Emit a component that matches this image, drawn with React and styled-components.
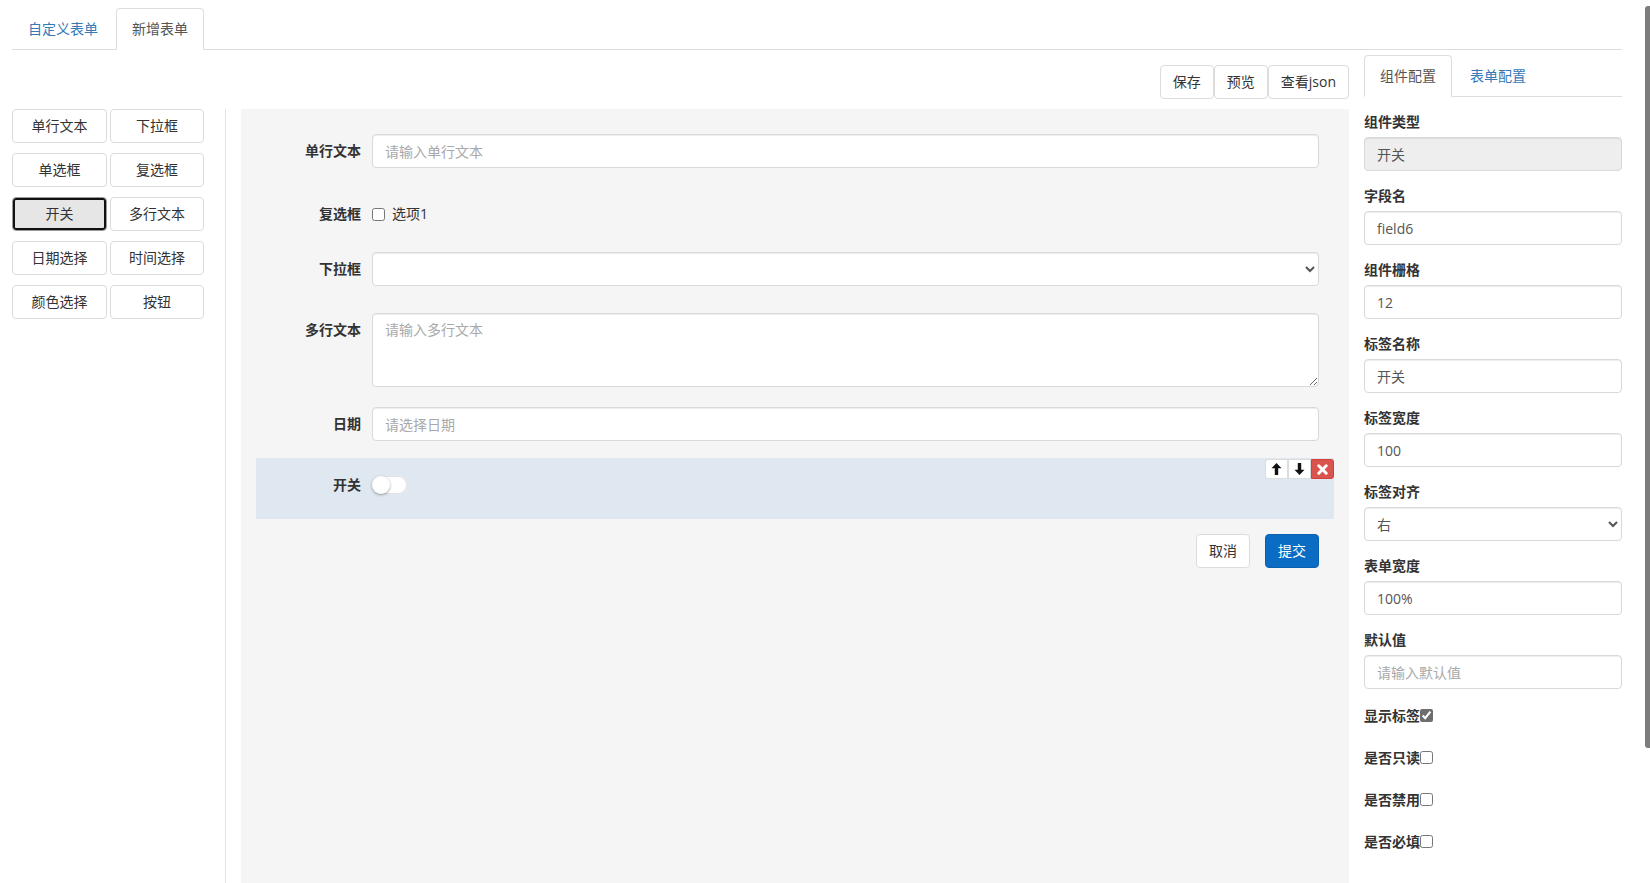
import React from "react";
import styled, { createGlobalStyle, css } from "styled-components";

const GlobalStyle = createGlobalStyle`
  * { box-sizing: border-box; }
  html { scrollbar-width: none; }
  ::-webkit-scrollbar { width: 0; height: 0; }
  body {
    margin: 0;
    background: #fff;
    color: #333;
    font-family: "Open Sans", "Noto Sans CJK SC", sans-serif;
    font-size: 14px;
    line-height: 20px;
  }
`;

const ScrollThumb = styled.div`
  position: fixed;
  top: 6px;
  right: 0;
  width: 5px;
  height: 742px;
  background: #7d7d7d;
  border-radius: 3px 0 0 3px;
  z-index: 10;
`;

const Page = styled.div`
  width: 1610px;
  margin-left: 12px;
  padding-top: 8px;
`;

const NavTabs = styled.div`
  display: flex;
  border-bottom: 1px solid #ddd;
`;

const Tab = styled.div`
  padding: 10px 15px;
  margin-right: 2px;
  margin-bottom: -1px;
  border: 1px solid transparent;
  border-radius: 4px 4px 0 0;
  line-height: 20px;
  color: #337ab7;
  cursor: pointer;
  ${(p) =>
    p.$active &&
    css`
      color: #555;
      background: #fff;
      border-color: #ddd #ddd transparent;
    `}
`;

const Main = styled.div`
  display: flex;
  align-items: stretch;
`;

const LeftCol = styled.div`
  width: 214px;
  margin-top: 59px;
  border-right: 1px solid #e3e3e3;
`;

const WidgetGrid = styled.div`
  display: grid;
  grid-template-columns: 95px 94px;
  column-gap: 3px;
  row-gap: 10px;
`;

const Btn = styled.button`
  height: 34px;
  padding: 6px 12px;
  font: inherit;
  line-height: 20px;
  color: #333;
  background: #fff;
  border: 1px solid #dcdcdc;
  border-radius: 4px;
  white-space: nowrap;
  cursor: pointer;
`;

const WidgetBtn = styled(Btn)`
  ${(p) =>
    p.$selected &&
    css`
      background: #e6e6e6;
      border-color: #9a9a9a;
      box-shadow: inset 0 0 0 2px #111;
    `}
`;

const CenterCol = styled.div`
  width: 1108px;
  margin-left: 15px;
  display: flex;
  flex-direction: column;
`;

const Toolbar = styled.div`
  display: flex;
  justify-content: flex-end;
  margin-top: 15px;
  margin-bottom: 10px;
`;

const Canvas = styled.div`
  flex: 1;
  min-height: 933px;
  background: #f5f5f5;
  padding: 25px 15px 15px;
  display: flex;
  flex-direction: column;
`;

const FormItem = styled.div`
  position: relative;
  display: flex;
  align-items: flex-start;
  min-height: 34px;
  padding: 0 15px;
  margin-top: ${(p) => p.$gap || 0}px;
  ${(p) =>
    p.$active &&
    css`
      background: #dfe8f1;
      padding: 10px 15px 17px;
    `}
`;

const ItemLabel = styled.div`
  flex-shrink: 0;
  width: 101px;
  padding: 7px 11px 0 0;
  text-align: right;
  font-weight: bold;
  line-height: 20px;
`;

const controlBase = css`
  flex: 1;
  width: 100%;
  height: 34px;
  padding: 6px 12px;
  font: inherit;
  line-height: 20px;
  color: #555;
  background: #fff;
  border: 1px solid #d9d9d9;
  border-radius: 4px;
  box-shadow: inset 0 1px 1px rgba(0, 0, 0, 0.075);
  outline: none;
  &::placeholder { color: #a9a9a9; }
  &:disabled { background: #eee; color: #555; }
`;

const Input = styled.input`
  ${controlBase}
`;

const Select = styled.select`
  ${controlBase}
  padding: 6px 8px;
`;

const TextArea = styled.textarea`
  ${controlBase}
  height: 74px;
  resize: vertical;
`;

const CheckLine = styled.label`
  display: flex;
  align-items: center;
  padding-top: 7px;
  line-height: 20px;
  color: #333;
`;

const Check = styled.input`
  width: 13px;
  height: 13px;
  margin: 0 7px 0 0;
  accent-color: #6e6e6e;
`;

const SwitchWrap = styled.div`
  display: flex;
  align-items: center;
  height: 34px;
`;

const SwitchTrack = styled.span`
  position: relative;
  display: inline-block;
  width: 35px;
  height: 18px;
  border-radius: 9px;
  background: #fff;
  box-shadow: inset 0 0 0 1px #e2e2e2;
`;

const SwitchKnob = styled.span`
  position: absolute;
  left: 0;
  top: 0;
  width: 18px;
  height: 18px;
  border-radius: 50%;
  background: #fff;
  box-shadow: 0 1px 3px rgba(0, 0, 0, 0.35);
`;

const ItemTools = styled.div`
  position: absolute;
  top: 1px;
  right: 0;
  display: flex;
`;

const ToolBtn = styled.button`
  width: 23px;
  height: 20px;
  padding: 0;
  display: flex;
  align-items: center;
  justify-content: center;
  background: ${(p) => (p.$danger ? "#d9534f" : "#fff")};
  border: 1px solid ${(p) => (p.$danger ? "#d43f3a" : "#ddd")};
  border-radius: ${(p) => (p.$danger ? "0 3px 3px 0" : p.$first ? "3px 0 0 3px" : "0")};
  cursor: pointer;
`;

const Actions = styled.div`
  display: flex;
  justify-content: flex-end;
  gap: 15px;
  padding: 0 15px;
  margin-top: 15px;
`;

const PrimaryBtn = styled(Btn)`
  color: #fff;
  background: #0a6cc2;
  border-color: #0962b0;
`;

const RightCol = styled.div`
  width: 258px;
  margin-left: 15px;
  padding-top: 5px;
`;

const ConfigBody = styled.div`
  padding-top: 15px;
`;

const FormGroup = styled.div`
  margin-bottom: 15px;
`;

const GroupLabel = styled.div`
  font-weight: bold;
  line-height: 20px;
  margin-bottom: 5px;
`;

const CheckRow = styled.div`
  display: flex;
  align-items: flex-start;
  height: 42px;
  padding-top: 2px;
  font-weight: bold;
  line-height: 20px;
`;

const RowCheck = styled.input`
  width: 13px;
  height: 13px;
  margin: 3px 0 0 0;
  accent-color: #6e6e6e;
`;

const ArrowUp = () => (
  <svg width="11" height="12" viewBox="0 0 11 12">
    <path d="M5.5 0 L10.5 5.2 H7.2 V12 H3.8 V5.2 H0.5 Z" fill="#111" />
  </svg>
);

const ArrowDown = () => (
  <svg width="11" height="12" viewBox="0 0 11 12">
    <path d="M5.5 12 L10.5 6.8 H7.2 V0 H3.8 V6.8 H0.5 Z" fill="#111" />
  </svg>
);

const CloseX = () => (
  <svg width="11" height="11" viewBox="0 0 11 11">
    <path d="M1.8 1.8 L9.2 9.2 M9.2 1.8 L1.8 9.2" stroke="#fff" strokeWidth="3" strokeLinecap="round" />
  </svg>
);

const widgets = ["单行文本", "下拉框", "单选框", "复选框", "开关", "多行文本", "日期选择", "时间选择", "颜色选择", "按钮"];

const configFields = [
  { label: "组件类型", value: "开关", disabled: true },
  { label: "字段名", value: "field6" },
  { label: "组件栅格", value: "12" },
  { label: "标签名称", value: "开关" },
  { label: "标签宽度", value: "100" },
  { label: "标签对齐", select: "右" },
  { label: "表单宽度", value: "100%" },
  { label: "默认值", placeholder: "请输入默认值" },
];

const checkRows = [
  { label: "显示标签", checked: true },
  { label: "是否只读" },
  { label: "是否禁用" },
  { label: "是否必填" },
];

export default function App() {
  return (
    <>
      <GlobalStyle />
      <ScrollThumb />
      <Page>
        <NavTabs>
          <Tab>自定义表单</Tab>
          <Tab $active>新增表单</Tab>
        </NavTabs>
        <Main>
          <LeftCol>
            <WidgetGrid>
              {widgets.map((w) => (
                <WidgetBtn key={w} $selected={w === "开关"}>
                  {w}
                </WidgetBtn>
              ))}
            </WidgetGrid>
          </LeftCol>

          <CenterCol>
            <Toolbar>
              <Btn>保存</Btn>
              <Btn>预览</Btn>
              <Btn>查看json</Btn>
            </Toolbar>
            <Canvas>
              <FormItem>
                <ItemLabel>单行文本</ItemLabel>
                <Input placeholder="请输入单行文本" />
              </FormItem>
              <FormItem $gap={29}>
                <ItemLabel>复选框</ItemLabel>
                <CheckLine>
                  <Check type="checkbox" />
                  选项1
                </CheckLine>
              </FormItem>
              <FormItem $gap={21}>
                <ItemLabel>下拉框</ItemLabel>
                <Select defaultValue="">
                  <option value=""></option>
                </Select>
              </FormItem>
              <FormItem $gap={27}>
                <ItemLabel>多行文本</ItemLabel>
                <TextArea placeholder="请输入多行文本" />
              </FormItem>
              <FormItem $gap={20}>
                <ItemLabel>日期</ItemLabel>
                <Input placeholder="请选择日期" />
              </FormItem>
              <FormItem $gap={17} $active>
                <ItemLabel>开关</ItemLabel>
                <SwitchWrap>
                  <SwitchTrack>
                    <SwitchKnob />
                  </SwitchTrack>
                </SwitchWrap>
                <ItemTools>
                  <ToolBtn $first>
                    <ArrowUp />
                  </ToolBtn>
                  <ToolBtn>
                    <ArrowDown />
                  </ToolBtn>
                  <ToolBtn $danger>
                    <CloseX />
                  </ToolBtn>
                </ItemTools>
              </FormItem>
              <Actions>
                <Btn>取消</Btn>
                <PrimaryBtn>提交</PrimaryBtn>
              </Actions>
            </Canvas>
          </CenterCol>

          <RightCol>
            <NavTabs>
              <Tab $active>组件配置</Tab>
              <Tab>表单配置</Tab>
            </NavTabs>
            <ConfigBody>
              {configFields.map((f) => (
                <FormGroup key={f.label}>
                  <GroupLabel>{f.label}</GroupLabel>
                  {f.select ? (
                    <Select defaultValue={f.select}>
                      <option>左</option>
                      <option>右</option>
                      <option>上</option>
                    </Select>
                  ) : (
                    <Input
                      defaultValue={f.value}
                      placeholder={f.placeholder}
                      disabled={f.disabled}
                    />
                  )}
                </FormGroup>
              ))}
              {checkRows.map((c) => (
                <CheckRow key={c.label}>
                  {c.label}
                  <RowCheck type="checkbox" defaultChecked={c.checked} />
                </CheckRow>
              ))}
            </ConfigBody>
          </RightCol>
        </Main>
      </Page>
    </>
  );
}
